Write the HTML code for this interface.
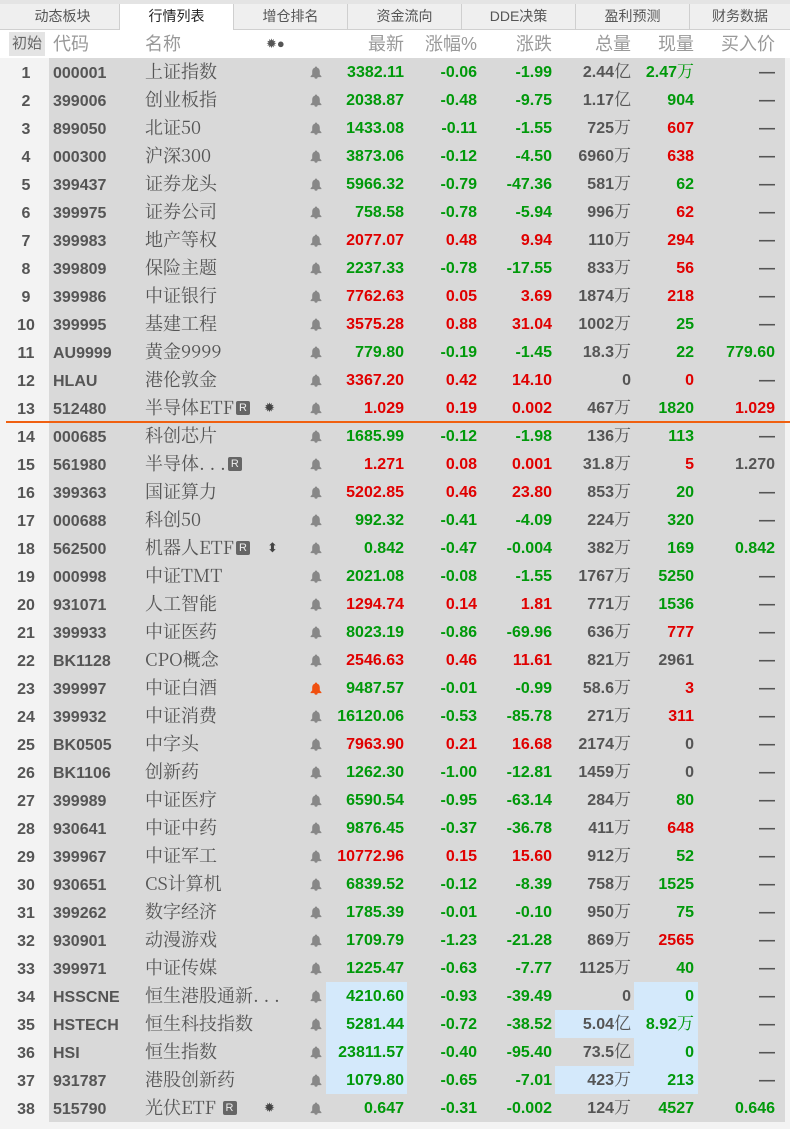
<!DOCTYPE html>
<html><head><meta charset="utf-8"><style>
*{margin:0;padding:0;box-sizing:border-box}
body{width:790px;height:1129px;background:#f3f3f3;position:relative;overflow:hidden;font-family:"Liberation Sans","Noto Sans CJK SC",sans-serif}
.tabs{position:absolute;left:0;top:0;width:790px;height:30px;background:#efefef;border-top:4px solid #e4e4e4;border-bottom:1px solid #d0d0d0}
.tab{position:absolute;top:0;height:26px;line-height:25px;text-align:center;font-size:14px;color:#555;border-right:1px solid #cfcfcf}
.tab.on{background:#fff;color:#222}
.hdr{position:absolute;left:0;top:30px;width:790px;height:28px;background:#fff}
.h{position:absolute;top:0;line-height:28px;font-size:18px;color:#999;font-family:"Liberation Sans","Noto Sans CJK SC",sans-serif}
.body{position:absolute;left:49px;top:58px;width:736px;height:1064px;background:#d9d9d9}
.r{position:absolute;left:0;width:790px;height:28px}
.r>span{position:absolute;top:0;height:28px;line-height:28px;white-space:nowrap}
.r>span span{position:static}
.n{left:0;width:52px;text-align:center;font-weight:bold;font-size:16px;color:#555;padding-top:2px}
.c{left:53px;font-weight:bold;font-size:16px;color:#555;padding-top:2px}
.r>.m{left:145px;top:-1px;font-family:"Noto Serif CJK SC","Liberation Serif",serif;font-size:18px;color:#555}
.s{left:264px;font-size:13px;color:#444}
.b{left:309px;width:14px}
.num{font-weight:bold;font-size:16px;text-align:right;padding-top:2px}
.p{left:326px;width:81px;padding-right:3px}
.z{left:410px;width:67px}
.d{left:480px;width:72px}
.v{left:555px;width:79px;padding-right:3px;color:#555}
.x{left:634px;width:64px;padding-right:4px}
.y{left:700px;width:75px}
.r>span.num{height:28px;line-height:26px}
.g{color:#00990a}.rd{color:#e00000}.gy{color:#555}
.u{font-family:"Noto Serif CJK SC",serif;font-weight:normal;font-size:17px;line-height:20px}
.hl{background:#d4e9fb}
.R{display:inline-block;width:14px;height:14px;background:#666;color:#eee;border-radius:2px;font-size:11px;line-height:14px;text-align:center;font-family:"Liberation Sans",sans-serif;font-style:normal;vertical-align:3px;margin-left:2px}
.bell{position:absolute;top:8px;left:1px;width:12px;height:13px}
</style></head><body>
<div class="tabs">
<div class="tab" style="left:6px;width:114px">动态板块</div>
<div class="tab on" style="left:120px;width:114px">行情列表</div>
<div class="tab" style="left:234px;width:114px">增仓排名</div>
<div class="tab" style="left:348px;width:114px">资金流向</div>
<div class="tab" style="left:462px;width:114px">DDE决策</div>
<div class="tab" style="left:576px;width:114px">盈利预测</div>
<div class="tab" style="left:690px;width:100px;border:none">财务数据</div>
</div>
<div class="hdr">
<div style="position:absolute;left:9px;top:2px;width:36px;height:24px;background:#e4e4e4;font-size:15px;line-height:24px;text-align:center;color:#666">初始</div>
<span class="h" style="left:53px">代码</span>
<span class="h" style="left:145px">名称</span>
<span class="h" style="left:266px;font-size:13px;color:#555">✹●</span>
<span class="h" style="left:326px;width:78px;text-align:right">最新</span>
<span class="h" style="left:410px;width:67px;text-align:right">涨幅%</span>
<span class="h" style="left:480px;width:72px;text-align:right">涨跌</span>
<span class="h" style="left:555px;width:76px;text-align:right">总量</span>
<span class="h" style="left:634px;width:60px;text-align:right">现量</span>
<span class="h" style="left:700px;width:75px;text-align:right">买入价</span>
</div>
<div class="body"></div>
<div style="position:absolute;left:6px;top:421px;width:784px;height:2px;background:#f06010"></div>
<div id="rows">
<svg width="0" height="0" style="position:absolute"><defs><symbol id="bl" viewBox="0 0 11 12"><path d="M5.5 0.5c0.6 0 1 .4 1 1 1.8.5 2.5 2 2.5 3.8v2.5l1.5 1.7v.8H0.5v-.8L2 7.8V5.3C2 3.5 2.7 2 4.5 1.5c0-.6.4-1 1-1zM4 10.3h3a1.5 1.5 0 0 1-3 0z"/></symbol></defs></svg>
<div class="r" style="top:58px"><span class="n">1</span><span class="c">000001</span><span class="m">上证指数</span><span class="b"><svg class="bell" fill="#888"><use href="#bl"/></svg></span><span class="num p g">3382.11</span><span class="num z g">-0.06</span><span class="num d g">-1.99</span><span class="num v">2.44<span class="u">亿</span></span><span class="num x g">2.47<span class="u">万</span></span><span class="num y gy">—</span></div>
<div class="r" style="top:86px"><span class="n">2</span><span class="c">399006</span><span class="m">创业板指</span><span class="b"><svg class="bell" fill="#888"><use href="#bl"/></svg></span><span class="num p g">2038.87</span><span class="num z g">-0.48</span><span class="num d g">-9.75</span><span class="num v">1.17<span class="u">亿</span></span><span class="num x g">904</span><span class="num y gy">—</span></div>
<div class="r" style="top:114px"><span class="n">3</span><span class="c">899050</span><span class="m">北证50</span><span class="b"><svg class="bell" fill="#888"><use href="#bl"/></svg></span><span class="num p g">1433.08</span><span class="num z g">-0.11</span><span class="num d g">-1.55</span><span class="num v">725<span class="u">万</span></span><span class="num x rd">607</span><span class="num y gy">—</span></div>
<div class="r" style="top:142px"><span class="n">4</span><span class="c">000300</span><span class="m">沪深300</span><span class="b"><svg class="bell" fill="#888"><use href="#bl"/></svg></span><span class="num p g">3873.06</span><span class="num z g">-0.12</span><span class="num d g">-4.50</span><span class="num v">6960<span class="u">万</span></span><span class="num x rd">638</span><span class="num y gy">—</span></div>
<div class="r" style="top:170px"><span class="n">5</span><span class="c">399437</span><span class="m">证券龙头</span><span class="b"><svg class="bell" fill="#888"><use href="#bl"/></svg></span><span class="num p g">5966.32</span><span class="num z g">-0.79</span><span class="num d g">-47.36</span><span class="num v">581<span class="u">万</span></span><span class="num x g">62</span><span class="num y gy">—</span></div>
<div class="r" style="top:198px"><span class="n">6</span><span class="c">399975</span><span class="m">证券公司</span><span class="b"><svg class="bell" fill="#888"><use href="#bl"/></svg></span><span class="num p g">758.58</span><span class="num z g">-0.78</span><span class="num d g">-5.94</span><span class="num v">996<span class="u">万</span></span><span class="num x rd">62</span><span class="num y gy">—</span></div>
<div class="r" style="top:226px"><span class="n">7</span><span class="c">399983</span><span class="m">地产等权</span><span class="b"><svg class="bell" fill="#888"><use href="#bl"/></svg></span><span class="num p rd">2077.07</span><span class="num z rd">0.48</span><span class="num d rd">9.94</span><span class="num v">110<span class="u">万</span></span><span class="num x rd">294</span><span class="num y gy">—</span></div>
<div class="r" style="top:254px"><span class="n">8</span><span class="c">399809</span><span class="m">保险主题</span><span class="b"><svg class="bell" fill="#888"><use href="#bl"/></svg></span><span class="num p g">2237.33</span><span class="num z g">-0.78</span><span class="num d g">-17.55</span><span class="num v">833<span class="u">万</span></span><span class="num x rd">56</span><span class="num y gy">—</span></div>
<div class="r" style="top:282px"><span class="n">9</span><span class="c">399986</span><span class="m">中证银行</span><span class="b"><svg class="bell" fill="#888"><use href="#bl"/></svg></span><span class="num p rd">7762.63</span><span class="num z rd">0.05</span><span class="num d rd">3.69</span><span class="num v">1874<span class="u">万</span></span><span class="num x rd">218</span><span class="num y gy">—</span></div>
<div class="r" style="top:310px"><span class="n">10</span><span class="c">399995</span><span class="m">基建工程</span><span class="b"><svg class="bell" fill="#888"><use href="#bl"/></svg></span><span class="num p rd">3575.28</span><span class="num z rd">0.88</span><span class="num d rd">31.04</span><span class="num v">1002<span class="u">万</span></span><span class="num x g">25</span><span class="num y gy">—</span></div>
<div class="r" style="top:338px"><span class="n">11</span><span class="c">AU9999</span><span class="m">黄金9999</span><span class="b"><svg class="bell" fill="#888"><use href="#bl"/></svg></span><span class="num p g">779.80</span><span class="num z g">-0.19</span><span class="num d g">-1.45</span><span class="num v">18.3<span class="u">万</span></span><span class="num x g">22</span><span class="num y g">779.60</span></div>
<div class="r" style="top:366px"><span class="n">12</span><span class="c">HLAU</span><span class="m">港伦敦金</span><span class="b"><svg class="bell" fill="#888"><use href="#bl"/></svg></span><span class="num p rd">3367.20</span><span class="num z rd">0.42</span><span class="num d rd">14.10</span><span class="num v">0</span><span class="num x rd">0</span><span class="num y gy">—</span></div>
<div class="r" style="top:394px"><span class="n">13</span><span class="c">512480</span><span class="m">半导体ETF<i class="R">R</i></span><span class="s">✹</span><span class="b"><svg class="bell" fill="#888"><use href="#bl"/></svg></span><span class="num p rd">1.029</span><span class="num z rd">0.19</span><span class="num d rd">0.002</span><span class="num v">467<span class="u">万</span></span><span class="num x g">1820</span><span class="num y rd">1.029</span></div>
<div class="r" style="top:422px"><span class="n">14</span><span class="c">000685</span><span class="m">科创芯片</span><span class="b"><svg class="bell" fill="#888"><use href="#bl"/></svg></span><span class="num p g">1685.99</span><span class="num z g">-0.12</span><span class="num d g">-1.98</span><span class="num v">136<span class="u">万</span></span><span class="num x g">113</span><span class="num y gy">—</span></div>
<div class="r" style="top:450px"><span class="n">15</span><span class="c">561980</span><span class="m">半导体. . .<i class="R">R</i></span><span class="b"><svg class="bell" fill="#888"><use href="#bl"/></svg></span><span class="num p rd">1.271</span><span class="num z rd">0.08</span><span class="num d rd">0.001</span><span class="num v">31.8<span class="u">万</span></span><span class="num x rd">5</span><span class="num y gy">1.270</span></div>
<div class="r" style="top:478px"><span class="n">16</span><span class="c">399363</span><span class="m">国证算力</span><span class="b"><svg class="bell" fill="#888"><use href="#bl"/></svg></span><span class="num p rd">5202.85</span><span class="num z rd">0.46</span><span class="num d rd">23.80</span><span class="num v">853<span class="u">万</span></span><span class="num x g">20</span><span class="num y gy">—</span></div>
<div class="r" style="top:506px"><span class="n">17</span><span class="c">000688</span><span class="m">科创50</span><span class="b"><svg class="bell" fill="#888"><use href="#bl"/></svg></span><span class="num p g">992.32</span><span class="num z g">-0.41</span><span class="num d g">-4.09</span><span class="num v">224<span class="u">万</span></span><span class="num x g">320</span><span class="num y gy">—</span></div>
<div class="r" style="top:534px"><span class="n">18</span><span class="c">562500</span><span class="m">机器人ETF<i class="R">R</i></span><span class="s" style="left:267px">⬍</span><span class="b"><svg class="bell" fill="#888"><use href="#bl"/></svg></span><span class="num p g">0.842</span><span class="num z g">-0.47</span><span class="num d g">-0.004</span><span class="num v">382<span class="u">万</span></span><span class="num x g">169</span><span class="num y g">0.842</span></div>
<div class="r" style="top:562px"><span class="n">19</span><span class="c">000998</span><span class="m">中证TMT</span><span class="b"><svg class="bell" fill="#888"><use href="#bl"/></svg></span><span class="num p g">2021.08</span><span class="num z g">-0.08</span><span class="num d g">-1.55</span><span class="num v">1767<span class="u">万</span></span><span class="num x g">5250</span><span class="num y gy">—</span></div>
<div class="r" style="top:590px"><span class="n">20</span><span class="c">931071</span><span class="m">人工智能</span><span class="b"><svg class="bell" fill="#888"><use href="#bl"/></svg></span><span class="num p rd">1294.74</span><span class="num z rd">0.14</span><span class="num d rd">1.81</span><span class="num v">771<span class="u">万</span></span><span class="num x g">1536</span><span class="num y gy">—</span></div>
<div class="r" style="top:618px"><span class="n">21</span><span class="c">399933</span><span class="m">中证医药</span><span class="b"><svg class="bell" fill="#888"><use href="#bl"/></svg></span><span class="num p g">8023.19</span><span class="num z g">-0.86</span><span class="num d g">-69.96</span><span class="num v">636<span class="u">万</span></span><span class="num x rd">777</span><span class="num y gy">—</span></div>
<div class="r" style="top:646px"><span class="n">22</span><span class="c">BK1128</span><span class="m">CPO概念</span><span class="b"><svg class="bell" fill="#888"><use href="#bl"/></svg></span><span class="num p rd">2546.63</span><span class="num z rd">0.46</span><span class="num d rd">11.61</span><span class="num v">821<span class="u">万</span></span><span class="num x gy">2961</span><span class="num y gy">—</span></div>
<div class="r" style="top:674px"><span class="n">23</span><span class="c">399997</span><span class="m">中证白酒</span><span class="b"><svg class="bell" fill="#f05010"><use href="#bl"/></svg></span><span class="num p g">9487.57</span><span class="num z g">-0.01</span><span class="num d g">-0.99</span><span class="num v">58.6<span class="u">万</span></span><span class="num x rd">3</span><span class="num y gy">—</span></div>
<div class="r" style="top:702px"><span class="n">24</span><span class="c">399932</span><span class="m">中证消费</span><span class="b"><svg class="bell" fill="#888"><use href="#bl"/></svg></span><span class="num p g">16120.06</span><span class="num z g">-0.53</span><span class="num d g">-85.78</span><span class="num v">271<span class="u">万</span></span><span class="num x rd">311</span><span class="num y gy">—</span></div>
<div class="r" style="top:730px"><span class="n">25</span><span class="c">BK0505</span><span class="m">中字头</span><span class="b"><svg class="bell" fill="#888"><use href="#bl"/></svg></span><span class="num p rd">7963.90</span><span class="num z rd">0.21</span><span class="num d rd">16.68</span><span class="num v">2174<span class="u">万</span></span><span class="num x gy">0</span><span class="num y gy">—</span></div>
<div class="r" style="top:758px"><span class="n">26</span><span class="c">BK1106</span><span class="m">创新药</span><span class="b"><svg class="bell" fill="#888"><use href="#bl"/></svg></span><span class="num p g">1262.30</span><span class="num z g">-1.00</span><span class="num d g">-12.81</span><span class="num v">1459<span class="u">万</span></span><span class="num x gy">0</span><span class="num y gy">—</span></div>
<div class="r" style="top:786px"><span class="n">27</span><span class="c">399989</span><span class="m">中证医疗</span><span class="b"><svg class="bell" fill="#888"><use href="#bl"/></svg></span><span class="num p g">6590.54</span><span class="num z g">-0.95</span><span class="num d g">-63.14</span><span class="num v">284<span class="u">万</span></span><span class="num x g">80</span><span class="num y gy">—</span></div>
<div class="r" style="top:814px"><span class="n">28</span><span class="c">930641</span><span class="m">中证中药</span><span class="b"><svg class="bell" fill="#888"><use href="#bl"/></svg></span><span class="num p g">9876.45</span><span class="num z g">-0.37</span><span class="num d g">-36.78</span><span class="num v">411<span class="u">万</span></span><span class="num x rd">648</span><span class="num y gy">—</span></div>
<div class="r" style="top:842px"><span class="n">29</span><span class="c">399967</span><span class="m">中证军工</span><span class="b"><svg class="bell" fill="#888"><use href="#bl"/></svg></span><span class="num p rd">10772.96</span><span class="num z rd">0.15</span><span class="num d rd">15.60</span><span class="num v">912<span class="u">万</span></span><span class="num x g">52</span><span class="num y gy">—</span></div>
<div class="r" style="top:870px"><span class="n">30</span><span class="c">930651</span><span class="m">CS计算机</span><span class="b"><svg class="bell" fill="#888"><use href="#bl"/></svg></span><span class="num p g">6839.52</span><span class="num z g">-0.12</span><span class="num d g">-8.39</span><span class="num v">758<span class="u">万</span></span><span class="num x g">1525</span><span class="num y gy">—</span></div>
<div class="r" style="top:898px"><span class="n">31</span><span class="c">399262</span><span class="m">数字经济</span><span class="b"><svg class="bell" fill="#888"><use href="#bl"/></svg></span><span class="num p g">1785.39</span><span class="num z g">-0.01</span><span class="num d g">-0.10</span><span class="num v">950<span class="u">万</span></span><span class="num x g">75</span><span class="num y gy">—</span></div>
<div class="r" style="top:926px"><span class="n">32</span><span class="c">930901</span><span class="m">动漫游戏</span><span class="b"><svg class="bell" fill="#888"><use href="#bl"/></svg></span><span class="num p g">1709.79</span><span class="num z g">-1.23</span><span class="num d g">-21.28</span><span class="num v">869<span class="u">万</span></span><span class="num x rd">2565</span><span class="num y gy">—</span></div>
<div class="r" style="top:954px"><span class="n">33</span><span class="c">399971</span><span class="m">中证传媒</span><span class="b"><svg class="bell" fill="#888"><use href="#bl"/></svg></span><span class="num p g">1225.47</span><span class="num z g">-0.63</span><span class="num d g">-7.77</span><span class="num v">1125<span class="u">万</span></span><span class="num x g">40</span><span class="num y gy">—</span></div>
<div class="r" style="top:982px"><span class="n">34</span><span class="c">HSSCNE</span><span class="m">恒生港股通新. . .</span><span class="b"><svg class="bell" fill="#888"><use href="#bl"/></svg></span><span class="num p g hl">4210.60</span><span class="num z g">-0.93</span><span class="num d g">-39.49</span><span class="num v">0</span><span class="num x g hl">0</span><span class="num y gy">—</span></div>
<div class="r" style="top:1010px"><span class="n">35</span><span class="c">HSTECH</span><span class="m">恒生科技指数</span><span class="b"><svg class="bell" fill="#888"><use href="#bl"/></svg></span><span class="num p g hl">5281.44</span><span class="num z g">-0.72</span><span class="num d g">-38.52</span><span class="num v hl">5.04<span class="u">亿</span></span><span class="num x g hl">8.92<span class="u">万</span></span><span class="num y gy">—</span></div>
<div class="r" style="top:1038px"><span class="n">36</span><span class="c">HSI</span><span class="m">恒生指数</span><span class="b"><svg class="bell" fill="#888"><use href="#bl"/></svg></span><span class="num p g hl">23811.57</span><span class="num z g">-0.40</span><span class="num d g">-95.40</span><span class="num v">73.5<span class="u">亿</span></span><span class="num x g hl">0</span><span class="num y gy">—</span></div>
<div class="r" style="top:1066px"><span class="n">37</span><span class="c">931787</span><span class="m">港股创新药</span><span class="b"><svg class="bell" fill="#888"><use href="#bl"/></svg></span><span class="num p g hl">1079.80</span><span class="num z g">-0.65</span><span class="num d g">-7.01</span><span class="num v hl">423<span class="u">万</span></span><span class="num x g hl">213</span><span class="num y gy">—</span></div>
<div class="r" style="top:1094px"><span class="n">38</span><span class="c">515790</span><span class="m">光伏ETF <i class="R">R</i></span><span class="s">✹</span><span class="b"><svg class="bell" fill="#888"><use href="#bl"/></svg></span><span class="num p g">0.647</span><span class="num z g">-0.31</span><span class="num d g">-0.002</span><span class="num v">124<span class="u">万</span></span><span class="num x g">4527</span><span class="num y g">0.646</span></div>
</div>
</body></html>
